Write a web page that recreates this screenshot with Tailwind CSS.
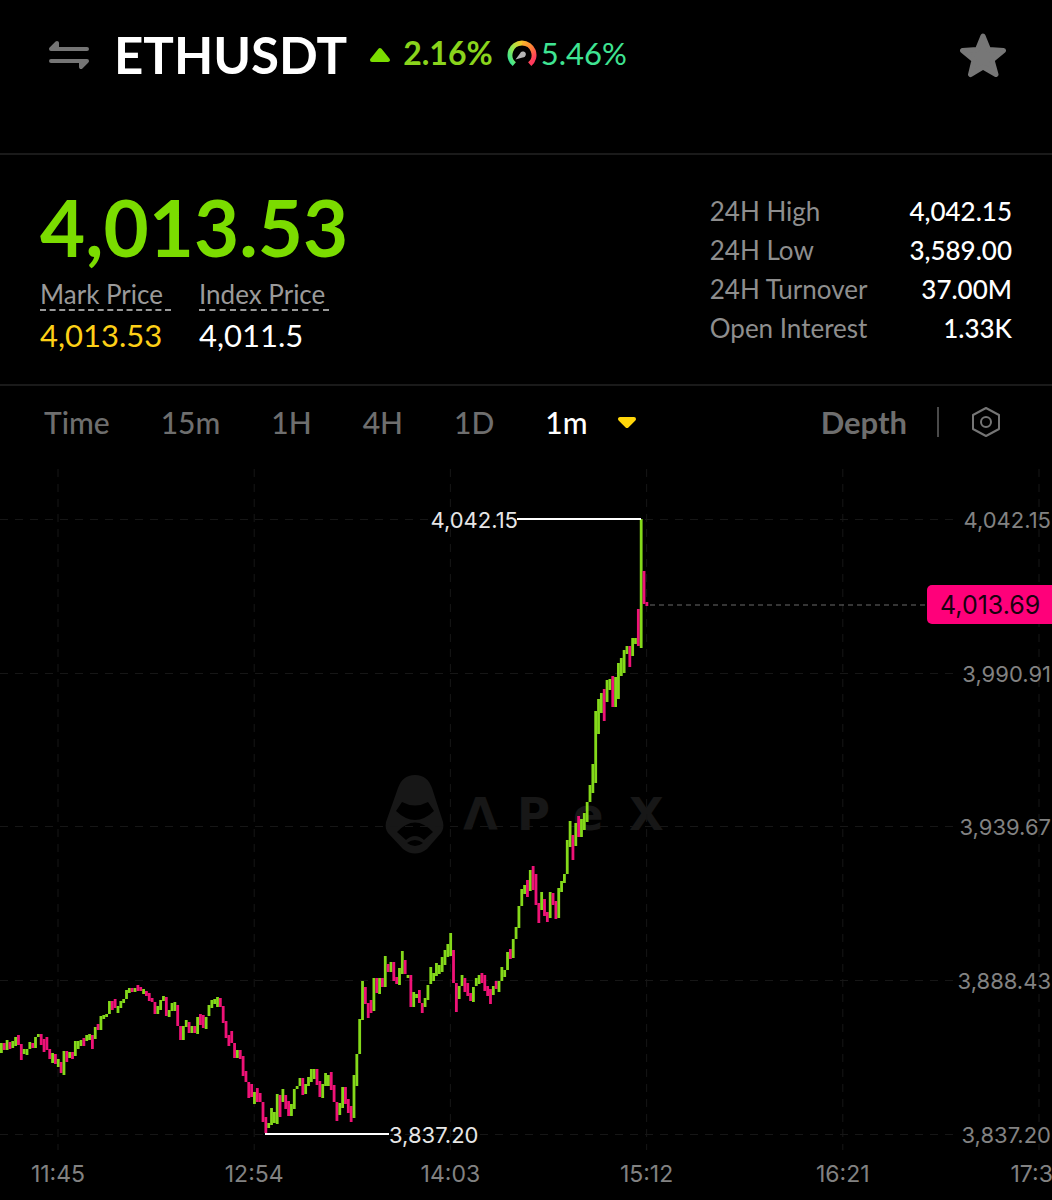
<!DOCTYPE html>
<html lang="en">
<head>
  <meta charset="UTF-8">
  <meta name="viewport" content="width=device-width, initial-scale=1.0">
  <title>ETHUSDT</title>
  <script src="https://cdn.jsdelivr.net/npm/@tailwindcss/browser@4"></script>
</head>
<body class="bg-black text-white font-['Lato','Open_Sans',sans-serif] min-h-screen">
  <!-- Pair header -->
  <header class="flex items-start h-[155px] pt-[23px] pl-12 pr-11 border-b-2 border-[#1a1a1a]">
    <div class="flex items-center w-full h-16">
      <button aria-label="Switch pair" class="mr-6">
        <svg class="w-[42px] h-8" viewBox="0 0 42 32" fill="#757575" stroke="#757575" stroke-width="4" stroke-linecap="round" stroke-linejoin="round">
          <path d="M3 10H39M3 10L9 4V10Z" />
          <path d="M3 22H39M39 22L33 28V22Z" />
        </svg>
      </button>
      <h1 class="text-[51px] leading-16 font-bold">ETHUSDT</h1>
      <svg class="w-[22px] h-4 ml-[22px]" viewBox="0 0 22 16" fill="#7bdc00" stroke="#7bdc00" stroke-width="4" stroke-linejoin="round">
        <path d="M11 3L19 13H3Z" />
      </svg>
      <span class="ml-3 text-[32px] leading-9 pb-1 font-bold text-[#8ad41c]">2.16%</span>
      <svg class="w-[30px] h-[30px] ml-[14px]" viewBox="0 0 30 30" fill="none" stroke-width="5">
        <defs>
          <linearGradient id="gaugeLeft" x1="0" y1="1" x2="1" y2="0">
            <stop offset="0" stop-color="#2fe59b" />
            <stop offset="0.5" stop-color="#9be84a" />
            <stop offset="1" stop-color="#f5c62a" />
          </linearGradient>
          <linearGradient id="gaugeRight" x1="0" y1="0" x2="0.6" y2="1">
            <stop offset="0" stop-color="#f9b62a" />
            <stop offset="0.5" stop-color="#ff7f38" />
            <stop offset="1" stop-color="#ff3a5c" />
          </linearGradient>
        </defs>
        <path d="M7.300 24.200A12 12 0 0 1 15 3" stroke="url(#gaugeLeft)" />
        <path d="M15 3A12 12 0 0 1 22.700 24.200" stroke="url(#gaugeRight)" />
        <path d="M8.500 19.500L13 13.500A3 3 0 1 1 15.500 17.500Z" fill="#b5b5b5" />
      </svg>
      <span class="ml-1 text-[31px] leading-9 pb-1 text-[#3fe493]">5.46%</span>
      <button aria-label="Favorite" class="ml-auto">
        <svg class="w-12 h-12" viewBox="0 0 48 48" fill="#777777" stroke="#777777" stroke-width="5" stroke-linejoin="round">
          <path d="M23 5L28.500 18.500L43.500 19.500L32 29L36 43.500L23 36L10.500 43.500L14 29L2.500 19.500L17.500 18.500Z" />
        </svg>
      </button>
    </div>
  </header>

  <!-- Price and 24h stats -->
  <section class="flex justify-between h-[231px] px-10 pt-8 border-b-2 border-[#1a1a1a]">
    <div>
      <div class="text-[78px] leading-[80px] font-bold text-[#7bdc00]">4,013.53</div>
      <div class="flex gap-7 mt-3">
        <div>
          <div class="border-b-2 border-dashed border-[#9a9a9a] pr-2 text-[26px] leading-[30px] text-[#9a9a9a]">Mark Price</div>
          <div class="mt-1 text-[31px] leading-10 text-[#fdd017]">4,013.53</div>
        </div>
        <div>
          <div class="border-b-2 border-dashed border-[#9a9a9a] pr-1 text-[26px] leading-[30px] text-[#9a9a9a]">Index Price</div>
          <div class="mt-1 text-[31px] leading-10">4,011.5</div>
        </div>
      </div>
    </div>
    <dl class="grid grid-cols-[auto_auto] content-start gap-x-[42px] pt-[5px] text-[26px] leading-[39px]">
      <dt class="text-[#8e8e8e]">24H High</dt>
      <dd class="text-right font-medium">4,042.15</dd>
      <dt class="text-[#8e8e8e]">24H Low</dt>
      <dd class="text-right font-medium">3,589.00</dd>
      <dt class="text-[#8e8e8e]">24H Turnover</dt>
      <dd class="text-right font-medium">37.00M</dd>
      <dt class="text-[#8e8e8e]">Open Interest</dt>
      <dd class="text-right font-medium">1.33K</dd>
    </dl>
  </section>

  <!-- Intervals -->
  <nav class="flex items-center h-[72px] pl-11 pr-[50px] text-[30px] text-[#6e6e6e] font-medium">
    <div class="flex items-center gap-[51px]">
      <button>Time</button>
      <button>15m</button>
      <button>1H</button>
      <button>4H</button>
      <button>1D</button>
      <button class="flex items-center gap-[30px] text-white">
        1m
        <svg class="w-5 h-4" viewBox="0 0 20 16" fill="#ffd60a" stroke="#ffd60a" stroke-width="4" stroke-linejoin="round">
          <path d="M3 5H17L10 12Z" />
        </svg>
      </button>
    </div>
    <button class="ml-auto text-[31px] font-bold">Depth</button>
    <div class="w-0.5 h-[30px] ml-[30px] mr-[31px] bg-[#4a4a4a]"></div>
    <button aria-label="Chart settings">
      <svg class="w-8 h-8" viewBox="0 0 32 32" fill="none" stroke="#757575" stroke-width="2" stroke-linejoin="round">
        <path d="M16 2L29 9V23L16 30L3 23V9Z" />
        <circle cx="16" cy="16" r="5" />
      </svg>
    </button>
  </nav>

  <!-- Chart -->
  <svg id="chart" class="block w-full h-auto mt-0.5 font-['Inter',sans-serif] text-[22px]" viewBox="0 0 1052 740">
    <g id="watermark" fill="#171717">
      <path fill-rule="evenodd" d="M415 315C406 315 401 320 398 328L386 362C385 367 386 370 388 373L403 389C411 395 419 395 427 389L441 373C443 370 444 367 443 362L432 328C429 320 424 315 415 315ZM402 342Q415 349 428 342L434 351Q415 369 396 351ZM397 372Q415 353 433 372L424 380Q415 372 406 380ZM407 383Q415 377 423 383Q415 389 407 383Z" />
      <text x="463 517 573 629" y="370" class="font-['DejaVu_Sans',sans-serif] text-[45px] font-bold">ΛPeX</text>
    </g>
    <g id="grid" stroke="#161616" stroke-dasharray="8 7"></g>
    <g id="candles"></g>
    <g fill="#e6e6e6">
      <path d="M517 59H641M265 674H389" stroke="#ffffff" stroke-width="2" />
      <text x="518" y="68" text-anchor="end">4,042.15</text>
      <text x="389" y="683">3,837.20</text>
    </g>
    <path d="M650 145H928" stroke="#6a6a6a" stroke-dasharray="5 4" />
    <g id="prices" fill="#828282"></g>
    <g id="times" fill="#828282" class="text-[23px]"></g>
    <rect x="927" y="125" width="130" height="39" rx="5" fill="#ff007a" />
    <text x="940" y="154" fill="#1a0010" class="text-[25px]">4,013.69</text>
  </svg>

  <script>
    const SVG_NS = 'http://www.w3.org/2000/svg';
    const GREEN = '#84d91a';
    const RED = '#ee1277';

    // one entry per minute: direction + top, bottom
    const candles = `
      g583,593 r583,590 g580,590 r582,589 g581,588 g577,586 r575,585 r584,600 g589,594 g589,595
      g582,589 r583,588 g577,588 g574,577 r574,585 r579,592 r577,590 r589,599 g593,603 r594,604
      g599,607 r602,613 g591,615 r591,602 g592,598 r592,599 g581,596 g581,589 g580,586 r578,586
      g575,581 g574,580 r575,589 g567,579 r564,570 g556,570 g555,559 g554,557 g541,554 r541,550
      r539,548 g546,553 g541,548 g539,543 g530,539 g528,533 r528,532 g528,532 r525,531 r527,531
      g529,534 r531,536 r533,541 r538,542 r542,554 g546,554 g540,550 g536,541 r537,556 g550,557
      g543,551 g542,551 r545,566 r566,580 g566,580 g560,567 r562,573 g566,573 r566,573 g557,574
      r554,565 r555,568 g557,569 g545,556 g540,548 g539,544 g537,547 r538,547 r546,563 r561,578
      r575,586 r571,583 r583,598 g590,598 r590,599 r596,616 r611,622 r622,638 r624,637 g632,644
      r628,642 r633,642 r642,662 r657,673 g663,668 g648,665 g652,663 g634,664 r635,657 g629,642
      r635,649 r641,656 g644,656 g629,649 g626,629 g618,626 r618,635 g624,634 g617,626 g609,622
      g609,619 r609,625 r621,637 g624,638 g613,626 g615,626 r612,630 r625,642 r642,661 g643,655
      g627,648 r627,644 r639,653 r646,662 g615,658 g594,626 g559,594 g521,560 r527,544 r543,558
      r540,553 g518,551 r518,533 g518,534 r518,527 g496,527 r504,512 g502,512 r502,521 r517,524
      g508,525 g491,514 r500,514 g515,518 r515,547 g532,547 g534,538 r530,543 r543,553 g538,547
      g525,540 g507,524 g513,521 g503,516 g505,514 g497,512 g490,505 g484,497 g473,496 r490,523
      r523,552 g526,539 g515,526 r518,532 r523,536 r533,541 g527,542 g518,526 g515,524 r513,523
      r515,531 r526,536 r529,544 g526,535 r521,529 g521,532 g507,521 g510,517 g492,510 r489,499
      g479,498 g467,479 g446,468 g429,446 g425,434 r420,437 g410,431 r406,430 r414,445 r443,463
      g432,450 r439,456 r452,462 g432,458 r433,445 r441,459 g428,458 g421,432 g414,423 g380,414
      g361,387 r375,400 g363,386 r356,377 g359,377 g353,370 g342,362 g325,342 g304,333 g251,323
      g239,274 g233,253 r229,261 g220,242 g219,230 r216,247 g217,247 g203,239 g198,216 g190,213
      g186,194 r186,207 g178,196 g178,184 r149,186 g59,188 r111,144 r142,146`.trim().split(/\s+/);

    const times = ['11:45', '12:54', '14:03', '15:12', '16:21', '17:30'];
    const prices = ['4,042.15', '3,990.91', '3,939.67', '3,888.43', '3,837.20'];
    const TIME_STEP = 196.2; // 69 candles between two time marks
    const PRICE_STEP = 153.7;

    function draw(parent, tag, attrs, text) {
      const el = document.createElementNS(SVG_NS, tag);
      for (const key in attrs) el.setAttribute(key, attrs[key]);
      if (text) el.textContent = text;
      document.getElementById(parent).appendChild(el);
    }

    times.forEach((time, i) => {
      const x = 58 + i * TIME_STEP;
      draw('grid', 'line', { x1: x, x2: x, y1: 9, y2: 690 });
      draw('times', 'text', { x: x, y: 722, 'text-anchor': 'middle' }, time);
    });

    prices.forEach((price, i) => {
      const y = Math.round(59 + i * PRICE_STEP);
      draw('grid', 'line', { x1: 0, x2: 955, y1: y + 0.5, y2: y + 0.5 });
      draw('prices', 'text', { x: 1051, y: y + 9, 'text-anchor': 'end' }, price);
    });

    candles.forEach((candle, i) => {
      const [top, bottom] = candle.slice(1).split(',').map(Number);
      draw('candles', 'rect', {
        x: i * TIME_STEP / 69,
        y: top,
        width: 2.8,
        height: bottom - top,
        fill: candle[0] === 'g' ? GREEN : RED
      });
    });
  </script>
</body>
</html>
